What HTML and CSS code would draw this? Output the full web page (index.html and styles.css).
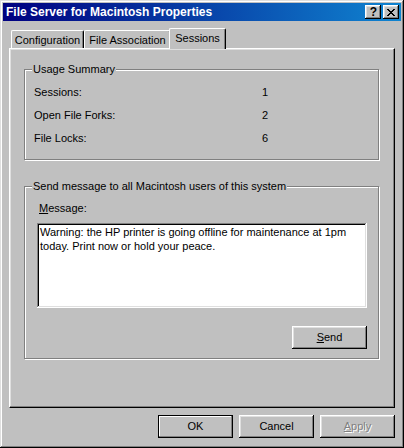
FILE: index.html
```html
<!DOCTYPE html>
<html>
<head>
<meta charset="utf-8">
<title>File Server for Macintosh Properties</title>
<link rel="stylesheet" href="styles.css">
</head>
<body>
<div class="window">
  <div class="titlebar">
    <span class="title">File Server for Macintosh Properties</span>
    <div class="tbtns">
      <div class="tbtn help">?</div>
      <div class="tbtn close">
        <svg width="8" height="7" viewBox="0 0 8 7" shape-rendering="crispEdges"><path fill="#000" d="M0 0h2v1H0zM6 0h2v1H6zM1 1h2v1H1zM5 1h2v1H5zM2 2h4v1H2zM3 3h2v1H3zM2 4h4v1H2zM1 5h2v1H1zM5 5h2v1H5zM0 6h2v1H0zM6 6h2v1H6z"/></svg>
      </div>
    </div>
  </div>
  <div class="content">
    <div class="tabs">
      <div class="tab t1">Configuration</div>
      <div class="tab t2">File Association</div>
      <div class="tab sel">Sessions</div>
    </div>
    <div class="panel">
      <div class="group g1">
        <div class="legend">Usage Summary</div>
        <div class="row first"><span class="lbl">Sessions:</span><span class="val">1</span></div>
        <div class="row"><span class="lbl">Open File Forks:</span><span class="val">2</span></div>
        <div class="row"><span class="lbl">File Locks:</span><span class="val">6</span></div>
      </div>
      <div class="group g2">
        <div class="legend">Send message to all Macintosh users of this system</div>
        <div class="msglbl"><u>M</u>essage:</div>
        <div class="msgbox">Warning: the HP printer is going offline for maintenance at 1pm<br>today. Print now or hold your peace.</div>
        <div class="sendrow"><div class="btn"><u>S</u>end</div></div>
      </div>
    </div>
    <div class="footer">
      <div class="btn default">OK</div>
      <div class="btn">Cancel</div>
      <div class="btn disabled"><u>A</u>pply</div>
    </div>
  </div>
</div>
</body>
</html>
```
FILE: styles.css
```css
html, body {
  margin: 0;
  padding: 0;
  background: #c0c0c0;
}
body {
  font-family: "Liberation Sans", Arial, sans-serif;
  font-size: 11px;
  color: #000;
}
.window {
  width: 404px;
  height: 448px;
  box-sizing: border-box;
  padding: 3px;
  background: #c0c0c0;
  box-shadow: inset -1px -1px #000, inset 1px 1px #dfdfdf, inset -2px -2px #808080, inset 2px 2px #fff;
  display: flex;
  flex-direction: column;
}
.titlebar {
  height: 18px;
  background: linear-gradient(to right, #000080, #1084d0);
  display: flex;
  align-items: flex-start;
  padding: 0 2px 0 3px;
}
.title {
  flex: 1;
  color: #fff;
  font-weight: bold;
  font-size: 12px;
  line-height: 18px;
  white-space: nowrap;
}
.tbtns {
  display: flex;
  gap: 2px;
  margin-top: 2px;
}
.tbtn {
  width: 16px;
  height: 14px;
  box-sizing: border-box;
  background: #c0c0c0;
  box-shadow: inset -1px -1px #000, inset 1px 1px #fff, inset -2px -2px #808080, inset 2px 2px #dfdfdf;
  display: flex;
  align-items: center;
  justify-content: center;
}
.help {
  font-weight: bold;
  font-size: 12px;
  line-height: 14px;
  padding-left: 1px;
}
.close svg {
  display: block;
  margin-left: 0;
}
.content {
  flex: 1;
  padding: 7px 6px 0 6px;
  display: flex;
  flex-direction: column;
}
.tabs {
  display: flex;
  align-items: flex-end;
  height: 20px;
  padding-left: 2px;
  position: relative;
  z-index: 1;
}
.tab {
  box-sizing: border-box;
  height: 18px;
  border-top: 1px solid #fff;
  border-left: 1px solid #fff;
  border-right: 1px solid #000;
  box-shadow: inset -1px 0 #808080;
  border-top-left-radius: 2px;
  border-top-right-radius: 2px;
  text-align: center;
  line-height: 13px;
  padding-top: 3px;
  white-space: nowrap;
  background: #c0c0c0;
}
.t1 { width: 73px; }
.t2 { width: 87px; }
.sel {
  width: 57px;
  height: 21px;
  margin-left: -2px;
  margin-bottom: -1px;
  padding-top: 3px;
}
.panel {
  box-sizing: border-box;
  height: 360px;
  border: 1px solid;
  border-color: #fff #000 #000 #fff;
  box-shadow: inset -1px -1px #808080, inset 1px 1px #dfdfdf;
  padding: 20px 0 0 14px;
}
.group {
  box-sizing: border-box;
  width: 355px;
  border: 1px solid #808080;
  box-shadow: 1px 1px #fff, inset 1px 1px #fff;
  display: flex;
  flex-direction: column;
  align-items: flex-start;
}
.legend {
  background: #c0c0c0;
  padding: 0 1px;
  line-height: 13px;
  margin-top: -7px;
  white-space: nowrap;
}
.g1 {
  height: 91px;
  padding-left: 9px;
}
.g1 .legend { margin-left: -2px; }
.row {
  display: flex;
  line-height: 23px;
}
.row.first { margin-top: 5px; }
.lbl { width: 228px; }
.g2 {
  height: 173px;
  margin-top: 26px;
  padding-left: 12px;
}
.g2 .legend { margin-left: -5px; }
.msglbl {
  margin: 9px 0 0 2px;
  line-height: 13px;
}
.msgbox {
  box-sizing: border-box;
  width: 330px;
  height: 85px;
  margin-top: 8px;
  background: #fff;
  box-shadow: inset -1px -1px #fff, inset 1px 1px #808080, inset -2px -2px #dfdfdf, inset 2px 2px #000;
  padding: 2px 3px;
  line-height: 14px;
  white-space: nowrap;
}
.sendrow {
  width: 330px;
  display: flex;
  justify-content: flex-end;
  margin-top: 18px;
}
.btn {
  box-sizing: border-box;
  width: 75px;
  height: 23px;
  background: #c0c0c0;
  box-shadow: inset -1px -1px #000, inset 1px 1px #fff, inset -2px -2px #808080, inset 2px 2px #dfdfdf;
  display: flex;
  align-items: center;
  justify-content: center;
  line-height: 13px;
}
.btn.default {
  box-shadow: inset 0 0 0 1px #000, inset -2px -2px #808080, inset 2px 2px #fff;
}
.btn.disabled {
  color: #808080;
  text-shadow: 1px 1px #fff;
}
.footer {
  display: flex;
  justify-content: flex-end;
  gap: 6px;
  margin-top: 7px;
}
```
